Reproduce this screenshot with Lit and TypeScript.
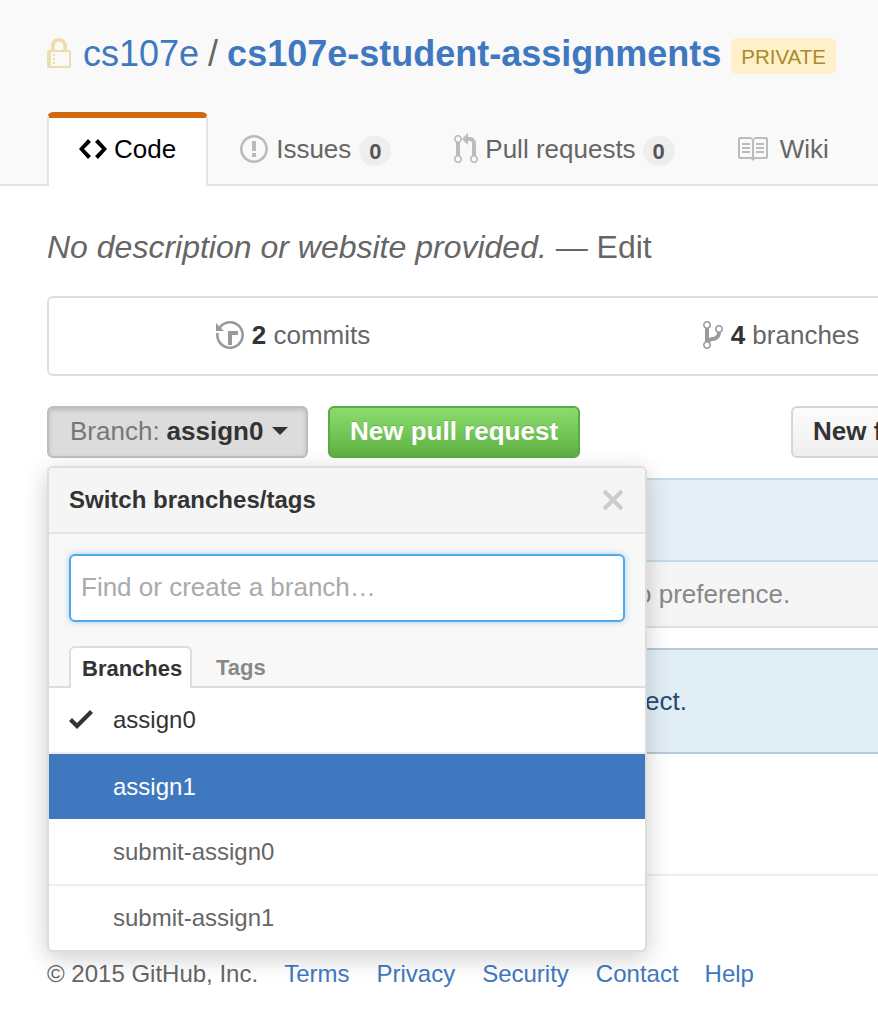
import { LitElement, css, html, svg } from "lit";
import { customElement } from "lit/decorators.js";

// octicons, drawn at twice their natural size because the reference is a retina shot
const ICONS: Record<string, [number, string]> = {
  lock: [12, "M4 13H3v-1h1v1zm8-6v7c0 .55-.45 1-1 1H1c-.55 0-1-.45-1-1V7c0-.55.45-1 1-1h1V4c0-2.2 1.8-4 4-4s4 1.8 4 4v2h1c.55 0 1 .45 1 1zM3.8 6h4.41V4c0-1.22-.98-2.2-2.2-2.2-1.22 0-2.2.98-2.2 2.2v2H3.8zM11 7H2v7h9V7zM4 8H3v1h1V8zm0 2H3v1h1v-1z"],
  code: [14, "M9.5 3L8 4.5 11.5 8 8 11.5 9.5 13 14 8 9.5 3zm-5 0L0 8l4.5 5L6 11.5 2.5 8 6 4.5 4.5 3z"],
  issue: [14, "M7 2.3c3.14 0 5.7 2.56 5.7 5.7s-2.56 5.7-5.7 5.7A5.71 5.71 0 0 1 1.3 8c0-3.14 2.56-5.7 5.7-5.7zM7 1C3.14 1 0 4.14 0 8s3.14 7 7 7 7-3.14 7-7-3.14-7-7-7zm1 3H6v5h2V4zm0 6H6v2h2v-2z"],
  pull: [12, "M11 11.28V5c-.03-.78-.34-1.47-.94-2.06C9.46 2.35 8.78 2.03 8 2H7V0L4 3l3 3V4h1c.27.02.48.11.69.31.21.2.3.42.31.69v6.28A1.993 1.993 0 0 0 10 15a1.993 1.993 0 0 0 1-3.72zm-1 2.92c-.66 0-1.2-.55-1.2-1.2 0-.65.55-1.2 1.2-1.2.65 0 1.2.55 1.2 1.2 0 .65-.55 1.2-1.2 1.2zM4 3c0-1.11-.89-2-2-2a1.993 1.993 0 0 0-1 3.72v6.56A1.993 1.993 0 0 0 2 15a1.993 1.993 0 0 0 1-3.72V4.72c.59-.34 1-.98 1-1.72zm-.8 10c0 .66-.55 1.2-1.2 1.2-.65 0-1.2-.55-1.2-1.2 0-.65.55-1.2 1.2-1.2.65 0 1.2.55 1.2 1.2zM2 4.2C1.34 4.2.8 3.65.8 3c0-.65.55-1.2 1.2-1.2.65 0 1.2.55 1.2 1.2 0 .65-.55 1.2-1.2 1.2z"],
  book: [16, "M3 5h4v1H3V5zm0 3h4V7H3v1zm0 2h4V9H3v1zm11-5h-4v1h4V5zm0 2h-4v1h4V7zm0 2h-4v1h4V9zm2-6v9c0 .55-.45 1-1 1H9.5l-1 1-1-1H2c-.55 0-1-.45-1-1V3c0-.55.45-1 1-1h5.5l1 1 1-1H15c.55 0 1 .45 1 1zm-8 .5L7.5 3H2v9h6V3.5zm7-.5H9.5l-.5.5V12h6V3z"],
  history: [14, "M8 13H6V6h5v2H8v5zM7 1C4.81 1 2.87 2.02 1.59 3.59L0 2v4h4L2.5 4.5C3.55 3.17 5.17 2.3 7 2.3c3.14 0 5.7 2.56 5.7 5.7s-2.56 5.7-5.7 5.7A5.71 5.71 0 0 1 1.3 8c0-.34.03-.67.09-1H.08C.03 7.33 0 7.66 0 8c0 3.86 3.14 7 7 7s7-3.14 7-7-3.14-7-7-7z"],
  branch: [10, "M10 5c0-1.11-.89-2-2-2a1.993 1.993 0 0 0-1 3.72v.3c-.02.52-.23.98-.63 1.38-.4.4-.86.61-1.38.63-.83.02-1.48.16-2 .45V4.72a1.993 1.993 0 0 0-1-3.72C.88 1 0 1.89 0 3a2 2 0 0 0 1 1.72v6.56c-.59.35-1 .99-1 1.72 0 1.11.89 2 2 2 1.11 0 2-.89 2-2 0-.53-.2-1-.53-1.36.09-.06.48-.41.59-.47.25-.11.56-.17.94-.17 1.05-.05 1.95-.45 2.75-1.25S8.95 7.77 9 6.73h-.02C9.59 6.37 10 5.73 10 5zM2 1.8c.66 0 1.2.55 1.2 1.2 0 .65-.55 1.2-1.2 1.2C1.35 4.2.8 3.65.8 3c0-.65.55-1.2 1.2-1.2zm0 12.41c-.66 0-1.2-.55-1.2-1.2 0-.65.55-1.2 1.2-1.2.65 0 1.2.55 1.2 1.2 0 .65-.55 1.2-1.2 1.2zm6-8c-.66 0-1.2-.55-1.2-1.2 0-.65.55-1.2 1.2-1.2.65 0 1.2.55 1.2 1.2 0 .65-.55 1.2-1.2 1.2z"],
  check: [12, "M12 5l-8 8-4-4 1.5-1.5L4 10l6.5-6.5L12 5z"],
  x: [12, "M7.48 8l3.75 3.75-1.48 1.48L6 9.48l-3.75 3.75-1.48-1.48L4.52 8 .77 4.25l1.48-1.48L6 6.52l3.75-3.75 1.48 1.48L7.48 8z"],
};

function icon(name: string, cls = "") {
  const [w, d] = ICONS[name];
  return html`<svg class="icon ${cls}" width=${w * 2} height="32" viewBox="0 0 ${w} 16">${svg`<path d=${d}></path>`}</svg>`;
}

@customElement("app-root")
export class AppRoot extends LitElement {
  static styles = css`
    :host {
      display: block;
      width: 878px;
      height: 1018px;
      overflow: hidden;
      background: #fff;
      font-family: "Liberation Sans", Arial, sans-serif;
      color: #333;
    }
    .icon { fill: currentColor; flex: none; display: block; }
    a { color: #4078c0; text-decoration: none; }

    .head {
      height: 146px;
      background: #f9f9f9;
      border-bottom: 2px solid #e5e5e5;
      padding: 38px 0 0 47px;
      box-sizing: content-box;
    }
    .title { display: flex; align-items: center; height: 34px; font-size: 36px; line-height: 34px; white-space: nowrap; color: #666; }
    .title a, .sep { margin-top: -3px; }
    .lock { color: #eedcaa; margin-right: 12px; margin-top: -2px; }
    .sep { margin-left: 9px; margin-right: 9px; }
    .title strong { font-weight: bold; }
    .private {
      margin-left: 10px;
      margin-top: 1px;
      padding: 0 10px;
      height: 36px;
      line-height: 38px;
      font-size: 20.5px;
      background: #fff0c9;
      color: #a98a2d;
      border-radius: 6px;
    }
    .tabs { display: flex; margin-top: 40px; height: 74px; font-size: 26px; color: #666; }
    .tab { display: flex; align-items: center; padding: 0 32px; gap: 8px; height: 74px; box-sizing: border-box; white-space: nowrap; }
    .tab .icon { color: #bbb; }
    .tab.on {
      background: #fff;
      color: #000;
      border: solid #e5e5e5;
      border-width: 0 2px;
      border-top: 6px solid #d26911;
      border-radius: 6px 6px 0 0;
      padding: 0 30px 6px;
      gap: 7px;
    }
    .tab.on .icon { color: #000; }
    .tab.pull { margin-left: -1px; gap: 7px; }
    .tab.wiki { margin-left: -1px; }
    .tab.wiki .icon { margin-left: -2px; margin-right: 4px; }
    .count {
      background: #eee;
      color: #555;
      font-size: 22px;
      font-weight: bold;
      border-radius: 16px;
      height: 30px;
      line-height: 31px;
      width: 32px;
      text-align: center;
      margin-top: 4px;
    }

    .main { width: 1960px; padding-left: 47px; box-sizing: content-box; }
    .desc { padding-top: 43px; height: 67px; font-size: 32px; line-height: 36px; color: #666; white-space: nowrap; }
    .desc a { color: #666; }
    .stats {
      width: 1956px;
      height: 80px;
      box-sizing: border-box;
      border: 2px solid #ddd;
      border-radius: 6px;
      display: grid;
      grid-template-columns: repeat(4, 1fr);
      font-size: 26px;
      color: #666;
    }
    .stat { display: flex; align-items: center; justify-content: center; gap: 8px; padding-bottom: 2px; }
    .stat .icon { color: #999; }
    .stat b { color: #333; }
    .bar { display: flex; position: relative; margin-top: 30px; height: 52px; }
    .btn {
      box-sizing: border-box;
      height: 52px;
      border-radius: 6px;
      font-size: 26px;
      font-weight: bold;
      display: flex;
      align-items: center;
      padding: 0 20px 2px;
      white-space: nowrap;
      border: 2px solid #d5d5d5;
      background: linear-gradient(#fcfcfc, #eee);
      color: #333;
    }
    .branch {
      width: 261px;
      background: #dcdcdc;
      border-color: #bebebe;
      box-shadow: inset 0 2px 4px rgba(0, 0, 0, 0.15);
      padding: 0 0 2px 21px;
    }
    .branch span { font-weight: normal; color: #777; margin-right: 7px; }
    .caret { border: 8px solid transparent; border-top-color: #333; border-bottom: 0; margin-left: 9px; }
    .green {
      width: 252px;
      margin-left: 20px;
      background: linear-gradient(#8add6d, #60b044);
      border-color: #5ca941;
      color: #fff;
      text-shadow: 0 -1px 0 rgba(0, 0, 0, 0.15);
    }
    .new { margin-left: 211px; }

    .alert { box-sizing: border-box; font-size: 26px; white-space: nowrap; display: flex; align-items: center; }
    .a1 { margin-top: 20px; height: 84px; background: #e4eff5; border-top: 2px solid #c5dbe8; border-bottom: 2px solid #c5dbe8; }
    .a2 { height: 66px; background: #f5f5f5; border-bottom: 2px solid #e0e0e0; color: #888; padding: 0 0 0 590px; }
    .a3 { margin-top: 20px; height: 106px; background: #e2eef6; border-top: 2px solid #b9c8d6; border-bottom: 2px solid #b9c8d6; color: #264c72; padding: 0 0 0 598px; }
    .rule { margin-top: 120px; border-top: 2px solid #eee; }
    .foot { display: flex; align-items: center; height: 28px; margin-top: 84px; font-size: 24px; color: #666; white-space: nowrap; }
    .foot a { margin-left: 27px; }
    .foot a:first-of-type { margin-left: 26px; }
    .foot a:last-of-type { margin-left: 26px; }

    /* dropdown */
    .menu {
      position: absolute;
      left: 0;
      top: 60px;
      width: 600px;
      box-sizing: border-box;
      background: #fff;
      border: 2px solid #ddd;
      border-radius: 6px;
      box-shadow: 0 6px 24px rgba(0, 0, 0, 0.2);
      overflow: hidden;
      z-index: 10;
    }
    .m-head {
      height: 66px;
      box-sizing: border-box;
      background: #f5f5f5;
      border-bottom: 2px solid #e5e5e5;
      display: flex;
      align-items: center;
      justify-content: space-between;
      padding: 0 20px;
      font-size: 24px;
      font-weight: bold;
    }
    .m-head .icon { color: #ccc; }
    .m-body { background: #f8f8f8; height: 154px; box-sizing: border-box; padding: 20px 20px 0; position: relative; }
    .filter {
      height: 68px;
      box-sizing: border-box;
      width: 556px;
      border: 2px solid #51a7e8;
      border-radius: 6px;
      background: #fff;
      box-shadow: 0 0 6px rgba(81, 167, 232, 0.5);
      padding: 0 10px;
      font-size: 26px;
      line-height: 62px;
      color: #aaa;
      white-space: nowrap;
    }
    .m-tabs {
      position: absolute;
      left: 0;
      right: 0;
      bottom: 0;
      height: 42px;
      box-sizing: border-box;
      padding-left: 20px;
      border-bottom: 2px solid #ddd;
      display: flex;
      font-size: 22px;
      font-weight: bold;
    }
    .m-tab { height: 42px; box-sizing: border-box; padding: 2px 11px 0; display: flex; align-items: center; color: #888; margin-left: 13px; }
    .m-tab.on {
      background: #fff;
      color: #333;
      margin-left: 0;
      border: 2px solid #ddd;
      border-bottom: 0;
      border-radius: 6px 6px 0 0;
      width: 123px;
      flex: none;
      padding: 2px 10px 0 11px;
    }
    .row {
      height: 66px;
      box-sizing: border-box;
      border-bottom: 2px solid #eee;
      display: flex;
      align-items: center;
      font-size: 24px;
      color: #666;
      padding-left: 64px;
      position: relative;
    }
    .row.cur { color: #333; }
    .row.sel { background: #4078c0; color: #fff; border-bottom: 1px solid #fff; }
    .row:last-child { border-bottom: 0; height: 64px; }
    .row .icon { position: absolute; left: 20px; top: 15px; color: #333; }
  `;

  render() {
    return html`
      <div class="head">
        <div class="title">
          ${icon("lock", "lock")}
          <a href="#">cs107e</a><span class="sep">/</span><a href="#"><strong>cs107e-student-assignments</strong></a>
          <span class="private">PRIVATE</span>
        </div>
        <div class="tabs">
          <div class="tab on">${icon("code")}Code</div>
          <div class="tab">${icon("issue")}Issues<span class="count">0</span></div>
          <div class="tab pull">${icon("pull")}Pull requests<span class="count">0</span></div>
          <div class="tab wiki">${icon("book")}Wiki</div>
        </div>
      </div>
      <div class="main">
        <div class="desc"><em>No description or website provided.</em> — <a href="#">Edit</a></div>
        <div class="stats">
          <div class="stat">${icon("history")}<span><b>2</b> commits</span></div>
          <div class="stat">${icon("branch")}<span><b>4</b> branches</span></div>
          <div class="stat"></div>
          <div class="stat"></div>
        </div>
        <div class="bar">
          <div class="btn branch"><span>Branch:</span>assign0<i class="caret"></i></div>
          <div class="btn green">New pull request</div>
          <div class="btn new">New file</div>
          <div class="menu">
            <div class="m-head">Switch branches/tags ${icon("x")}</div>
            <div class="m-body">
              <div class="filter">Find or create a branch…</div>
              <div class="m-tabs">
                <div class="m-tab on">Branches</div>
                <div class="m-tab">Tags</div>
              </div>
            </div>
            <div class="row cur">${icon("check")}assign0</div>
            <div class="row sel">assign1</div>
            <div class="row">submit-assign0</div>
            <div class="row">submit-assign1</div>
          </div>
        </div>
        <div class="alert a1"></div>
        <div class="alert a2">o preference.</div>
        <div class="alert a3">ect.</div>
        <div class="rule"></div>
        <div class="foot">
          © 2015 GitHub, Inc.
          <a href="#">Terms</a><a href="#">Privacy</a><a href="#">Security</a><a href="#">Contact</a><a href="#">Help</a>
        </div>
      </div>
    `;
  }
}
